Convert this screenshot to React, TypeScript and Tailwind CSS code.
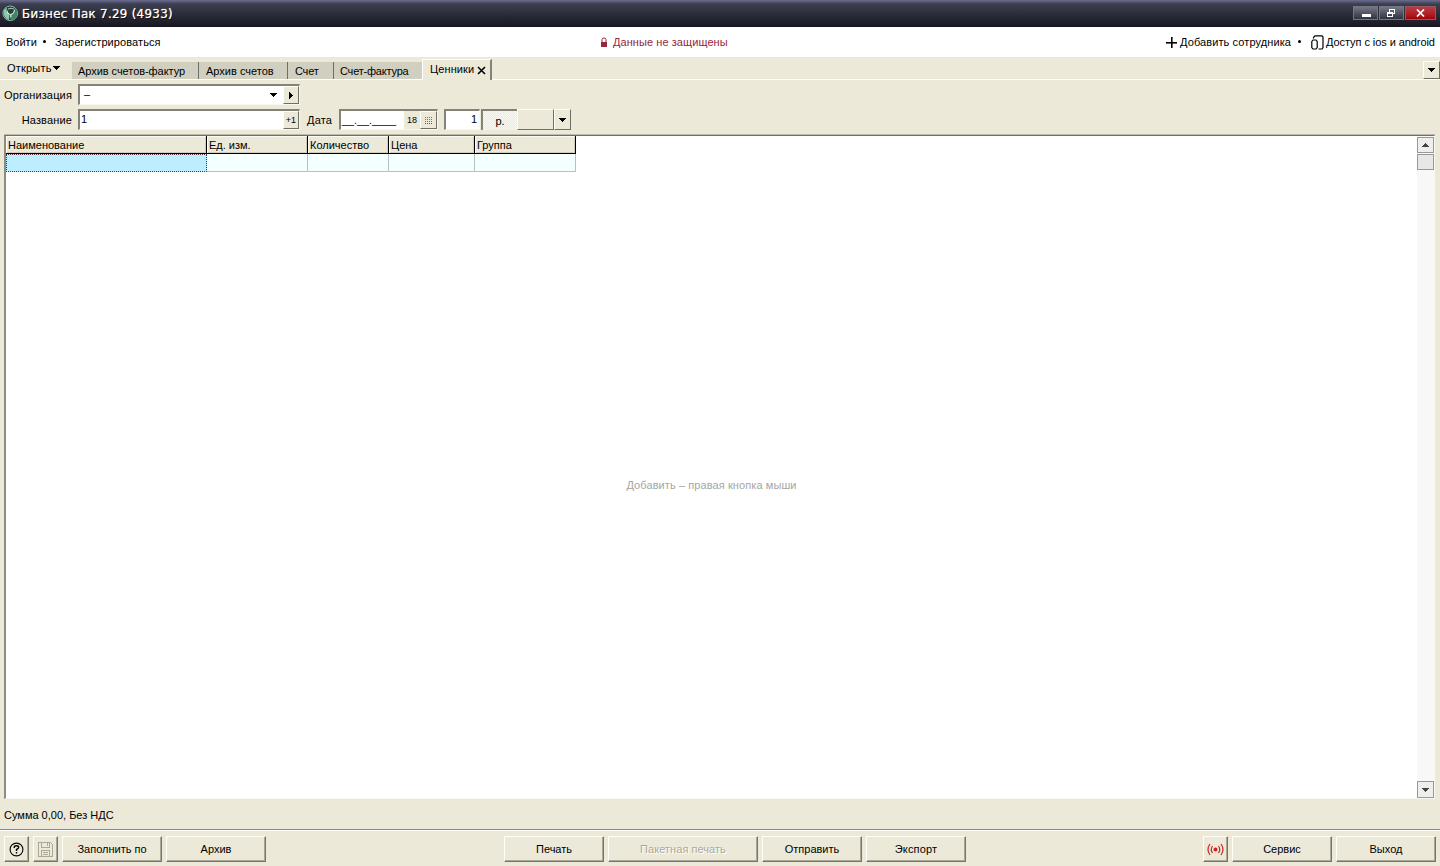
import React from 'react'

const tabs = [
    { label: 'Архив счетов-фактур', box: 'w-[127px] pl-[6px] border-r', text: 'tracking-[-0.05px]' },
    { label: 'Архив счетов', box: 'w-[89px] pl-[7px] border-r', text: 'tracking-[0px]' },
    { label: 'Счет', box: 'w-[46px] pl-[7px] border-r', text: 'tracking-[-0.2px]' },
    { label: 'Счет-фактура', box: 'w-[88px] pl-[6px]', text: 'tracking-[-0.2px]' },
]

const columns = [
    { label: 'Наименование', box: 'w-[201px]' },
    { label: 'Ед. изм.', box: 'w-[101px]' },
    { label: 'Количество', box: 'w-[81px]' },
    { label: 'Цена', box: 'w-[86px]' },
    { label: 'Группа', box: 'w-[101px]' },
]

const raised = 'border border-t-[#fffff8] border-l-[#fffff8] border-b-[#716f64] border-r-[#716f64] bg-[#ece9d8]'
const sunken = 'border-t-2 border-l-2 border-r border-b border-t-[#85827a] border-l-[#85827a] border-b-[#f8f7f0] border-r-[#f8f7f0] bg-white'

const Arrow = () => (
    <svg width="7" height="4" className="shrink-0" shapeRendering="crispEdges">
        <path d="M0 0H7V1H6V2H5V3H4V4H3V3H2V2H1V1H0Z" fill="currentColor" />
    </svg>
)

interface ButtonProps {
    children: React.ReactNode
    className?: string
    disabled?: boolean
}

const Button = ({ children, className = 'w-[100px]', disabled }: ButtonProps) => (
    <button
        disabled={disabled}
        className={`flex h-[26px] shrink-0 items-center justify-center whitespace-nowrap border border-t-[#fffff8] border-l-[#fffff8] border-r-[#77756a] border-b-[#77756a] bg-[#ece9d8] shadow-[inset_-1px_-1px_0_#aca899] ${disabled ? 'text-[#aca899] [text-shadow:1px_1px_0_#fff]' : ''} ${className}`}
    >
        {children}
    </button>
)

const TitleBar = () => (
    <header className="flex h-[27px] shrink-0 items-center bg-linear-to-b from-[#6d6d91] via-[#3c3f50] via-15% to-[#16171f] pl-[2px] pr-[4px]">
        <svg width="17" height="17" viewBox="0 0 17 17">
            <circle cx="8.2" cy="8.3" r="7.3" fill="#1c4438" stroke="#8fb5a4" strokeWidth="1" />
            <path d="M1.5 7.5Q2 4 5 2.5L4.5 6.5L7.5 10L7 15Q2 13.5 1.5 7.5Z" fill="#8cc9aa" />
            <path d="M8.5 15.5V10.5Q13 9 14 4Q16 7 14.5 11Q12.5 15 8.5 15.5Z" fill="#3f8867" />
            <path d="M5 5.5Q5.5 9.2 8.8 9.5Q12 9 12.7 4.5M8.8 9.5V12.5" fill="none" stroke="#e6f2ea" strokeWidth="1.1" />
            <path d="M6 4Q9 2.5 12 4" fill="none" stroke="#a9cdbc" />
        </svg>
        <h1 className="ml-[3px] font-['DejaVu_Sans',sans-serif] text-[12px] leading-[16px] tracking-[0.23px] text-white [text-shadow:1px_1px_0_#111,0_0_1px_#fff]">Бизнес Пак 7.29 (4933)</h1>
        <div className="mb-[2px] ml-auto flex gap-px">
            <button className="flex h-[14px] w-[25px] items-center justify-center border border-[#747684] bg-linear-to-b from-[#777887] to-[#303342]">
                <svg width="10" height="8" shapeRendering="crispEdges"><path d="M1 5H10V8H1Z" fill="#fff" /></svg>
            </button>
            <button className="flex h-[14px] w-[25px] items-center justify-center border border-[#747684] bg-linear-to-b from-[#777887] to-[#303342]">
                <svg width="9" height="8" shapeRendering="crispEdges" fill="none" stroke="#fff"><path d="M2.5 3V.5H7.5V4.5H6" /><path d="M.5 3.5H5.5V7.5H.5ZM1 4.5H5" /></svg>
            </button>
            <button className="flex h-[14px] w-[31px] items-center justify-center border border-[#9b555f] bg-linear-to-b from-[#bd3944] to-[#a00006]">
                <svg width="9" height="8" stroke="#fff" strokeWidth="1.7"><path d="M1 .5L8 7.5M8 .5L1 7.5" /></svg>
            </button>
        </div>
    </header>
)

const AccountBar = () => (
    <nav className="flex h-[30px] shrink-0 items-center bg-white pl-[6px] pr-[5px]">
        <div className="flex w-[594px] items-center">
            <span className="w-[31px]">Войти</span>
            <span className="mx-[6px] mb-px size-[3px] rounded-full bg-black" />
            <span className="ml-[3px] tracking-[0.09px]">Зарегистрироваться</span>
        </div>
        <div className="flex items-center text-[#96263a]">
            <svg width="8" height="11" viewBox="0 0 8 11"><path d="M2 5V2.5Q2 1 4 1T6 2.5V5" fill="none" stroke="currentColor" /><path d="M1 5H7V10H1Z" fill="currentColor" /></svg>
            <span className="ml-[5px] tracking-[0.07px]">Данные не защищены</span>
        </div>
        <div className="ml-auto flex items-center">
            <svg width="11" height="11" shapeRendering="crispEdges"><path d="M5 0H6V5H11V6H6V11H5V6H0V5H5Z" stroke="#000" strokeWidth=".6" /></svg>
            <span className="ml-[3px] w-[111px] tracking-[0.1px]">Добавить сотрудника</span>
            <span className="mr-[10px] mb-px ml-[7px] size-[3px] rounded-full bg-black" />
            <svg width="13" height="15" viewBox="0 0 13 15" fill="none" stroke="#000" strokeWidth="1.2"><path d="M2.5 3.5V2.5L4 .8H11L12 2V12.5L11 14H7.5" /><path d="M.8 6.5L2 5H5L6.2 6.5V12.5L5 14H2L.8 12.5Z" /></svg>
            <span className="ml-[2px] w-[109px] tracking-[-0.07px]">Доступ с ios и android</span>
        </div>
    </nav>
)

const TabBar = () => (
    <div className="flex h-[23px] shrink-0 items-end border-b border-white">
        <button className="mb-[2px] flex h-[18px] w-[72px] items-center pl-[7px]">
            <span className="w-[46px] text-left tracking-[0.2px]">Открыть</span><Arrow />
        </button>
        {tabs.map(tab => (
            <div key={tab.label} className={`flex h-[17px] items-center whitespace-nowrap border-[#706e63] bg-[#d1cfc0] pt-px ${tab.box} ${tab.text}`}>{tab.label}</div>
        ))}
        <div className="-mb-px flex h-[21px] w-[70px] items-center border-t border-r-2 border-l border-t-white border-r-[#85827a] border-l-white bg-[#ece9d8] pb-[2px] pl-[7px]">
            <span className="w-[46px] tracking-[0.1px]">Ценники</span>
            <svg width="9" height="9" className="mt-[2px] ml-px" stroke="#000" strokeWidth="1.6"><path d="M1 1L8 8M8 1L1 8" /></svg>
        </div>
        <button className={`ml-auto flex h-[18px] w-[17px] items-center justify-center ${raised}`}><Arrow /></button>
    </div>
)

const DocumentForm = () => (
    <div className="h-[55px] shrink-0 pt-[4px]">
        <div className="flex h-[21px] items-center">
            <span className="w-[72px] text-right tracking-[0.15px]">Организация</span>
            <div className={`ml-[6px] flex h-[21px] w-[222px] items-center pl-[4px] ${sunken}`}>
                <span className="pb-[2px]">–</span>
                <span className="mr-[6px] ml-auto pb-px"><Arrow /></span>
                <button className={`flex h-[18px] w-[16px] items-center justify-center ${raised}`}>
                    <svg width="4" height="7" shapeRendering="crispEdges"><path d="M0 0H1V1H2V2H3V3H4V4H3V5H2V6H1V7H0Z" /></svg>
                </button>
            </div>
        </div>
        <div className="mt-[4px] flex h-[21px] items-center">
            <span className="w-[72px] text-right tracking-[0.15px]">Название</span>
            <div className={`ml-[6px] flex h-[21px] w-[222px] items-center justify-between pl-px ${sunken}`}>
                <span className="pb-[2px]">1</span>
                <button className={`h-[18px] w-[16px] text-[9px] leading-[16px] ${raised}`}>+1</button>
            </div>
            <span className="ml-[7px] w-[26px] tracking-[0.2px]">Дата</span>
            <div className={`ml-[6px] flex h-[21px] w-[99px] items-center pl-px ${sunken}`}>
                <span className="tracking-[-0.1px]">__.__.____</span>
                <button className="ml-auto h-[18px] w-[16px] bg-[#ece9d8] text-[9px] leading-[16px]">18</button>
                <button className={`flex h-[18px] w-[17px] items-center justify-center ${raised}`}>
                    <svg width="8" height="7" shapeRendering="crispEdges" stroke="#77756a" strokeDasharray="1 1"><path d="M0 .5H8M0 2.5H8M0 4.5H8" /><path d="M0 6.5H8" stroke="#a34" /></svg>
                </button>
            </div>
            <div className={`ml-[6px] h-[21px] w-[36px] pr-[2px] text-right leading-[17px] ${sunken}`}>1</div>
            <div className="ml-px h-[21px] w-[36px] border-t-2 border-l-2 border-[#85827a] bg-[#f2f0e6] bg-[repeating-conic-gradient(#ece9d8_0_25%,#faf9f4_0_50%)] bg-[length:2px_2px] pt-[2px] text-center leading-[17px]">р.</div>
            <button className={`h-[21px] w-[37px] ${raised}`} />
            <button className={`flex h-[21px] w-[17px] items-center justify-center ${raised}`}><Arrow /></button>
        </div>
    </div>
)

const ScrollBar = () => (
    <div className="flex w-[17px] shrink-0 flex-col bg-[#f8f8f6] pt-px text-[#444]">
        <button className="flex h-[16px] items-center justify-center border border-[#999] bg-[#eeeeec]">
            <span className="rotate-180"><Arrow /></span>
        </button>
        <div className="mt-px h-[16px] border border-[#999] bg-[#e7e7e7]" />
        <button className="mt-auto flex h-[17px] items-center justify-center border border-[#999] bg-[#eeeeec]"><Arrow /></button>
    </div>
)

const PriceGrid = () => (
    <main className="mr-[5px] ml-[4px] flex h-[664px] shrink-0 border border-l-2 border-t-[#716f64] border-r-[#f8f7f0] border-b-[#f8f7f0] border-l-[#8e8b80] bg-white shadow-[0_-1px_0_#bdbaab]">
        <div className="flex grow flex-col">
            <div className="flex h-[18px]">
                {columns.map(col => (
                    <div key={col.label} className={`border-r border-b border-black bg-[#ece9d8] pl-[2px] leading-[18px] shadow-[inset_1px_1px_0_#fbfaf3,inset_-1px_-1px_0_#d0cdbd] ${col.box}`}>{col.label}</div>
                ))}
            </div>
            <div className="flex h-[18px]">
                {columns.map((col, i) => (
                    <div key={col.label} className={`${i === 0 ? 'border border-dotted border-[#503048] bg-[#bdeeff]' : 'border-r border-b border-[#b7bfbf] bg-[#f4ffff]'} ${col.box}`} />
                ))}
            </div>
            <p className="mt-[306px] text-center tracking-[0.09px] text-[#a5a5a5]">Добавить – правая кнопка мыши</p>
        </div>
        <ScrollBar />
    </main>
)

const BottomBar = () => (
    <footer className="flex h-[37px] shrink-0 items-start border-t border-[#8e8c80] pt-[6px] pr-[4px] pl-[4px] shadow-[inset_0_1px_0_#fff]">
        <div className="flex w-[500px] gap-[4px]">
            <Button className="w-[25px]">
                <svg width="15" height="15" viewBox="0 0 15 15" fill="none" stroke="#000" strokeWidth="1.1"><circle cx="7.5" cy="7.5" r="6.4" /><path d="M5.3 6V5Q5.3 3.7 7.5 3.7T9.7 5.3Q9.7 6.5 7.5 7.5V9M7.5 10V11.5" strokeWidth="1.4" /></svg>
            </Button>
            <Button className="w-[25px]" disabled>
                <svg width="15" height="15" viewBox="0 0 15 15" fill="none" stroke="#aca899" shapeRendering="crispEdges"><path d="M.5 .5H12.5L14.5 2.5V14.5H.5ZM3.5 .5V5.5H11.5V.5M9.5 1V4M3.5 14V8.5H11.5V14M5 10.5H10M5 12.5H10" /></svg>
            </Button>
            <Button>Заполнить по</Button>
            <Button>Архив</Button>
        </div>
        <div className="flex gap-[4px]">
            <Button>Печать</Button>
            <Button className="w-[150px] tracking-[0.05px]" disabled>Пакетная печать</Button>
            <Button>Отправить</Button>
            <Button className="w-[100px] tracking-[0.15px]">Экспорт</Button>
        </div>
        <div className="ml-auto flex gap-[4px]">
            <Button className="w-[25px]">
                <svg width="17" height="13" viewBox="0 0 17 13" fill="none" stroke="#c22922" strokeWidth="1.2"><circle cx="8.5" cy="6.5" r="1.4" fill="#c22922" /><path d="M5.5 3Q3 6.5 5.5 10M11.5 3Q14 6.5 11.5 10M3 1Q-1 6.5 3 12M14 1Q18 6.5 14 12" /></svg>
            </Button>
            <Button>Сервис</Button>
            <Button>Выход</Button>
        </div>
    </footer>
)

const App: React.FC = () => {
    return (
        <div className="flex h-[866px] w-[1440px] flex-col overflow-hidden whitespace-nowrap bg-[#ece9d8] font-['Liberation_Sans',Arial,sans-serif] text-[11px] leading-[14px] text-black">
            <TitleBar />
            <AccountBar />
            <TabBar />
            <DocumentForm />
            <PriceGrid />
            <div className="flex h-[30px] shrink-0 items-center pt-[2px] pl-[4px]">Сумма 0,00, Без НДС</div>
            <BottomBar />
        </div>
    )
}

export default App
